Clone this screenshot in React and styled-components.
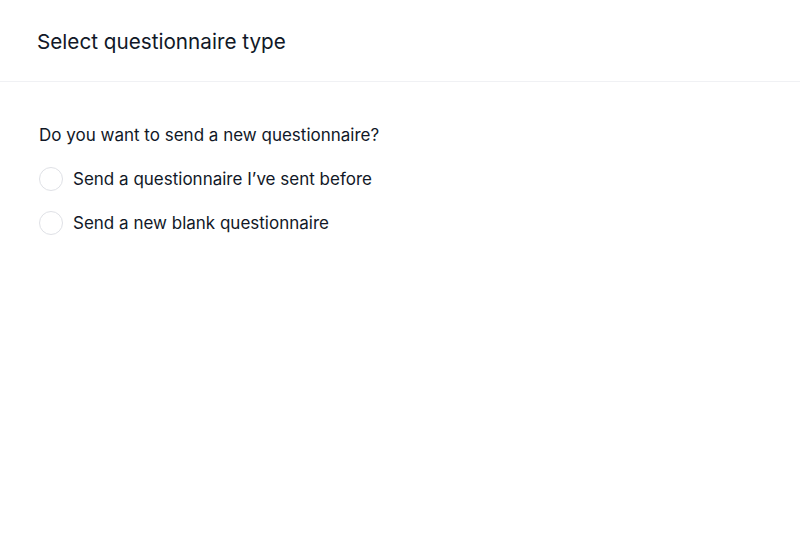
import { useState } from 'react';
import styled, { createGlobalStyle } from 'styled-components';

const GlobalStyle = createGlobalStyle`
    body {
        margin: 0;
        background: #ffffff;
        font-family: Inter, "Noto Sans", sans-serif;
        color: #111827;
    }
`;

const Page = styled.div`
    width: 800px;
    height: 560px;
    display: flex;
    flex-direction: column;
`;

const Header = styled.header`
    height: 82px;
    padding: 1px 37px 0 37px;
    box-sizing: border-box;
    display: flex;
    align-items: center;
    border-bottom: 1px solid #f0f1f4;
`;

const Title = styled.h1`
    margin: 0;
    font-size: 20.7px;
    font-weight: 400;
    color: #111827;
`;

const Body = styled.div`
    padding: 41px 39px;
    display: flex;
    flex-direction: column;
    gap: 20px;
`;

const Question = styled.p`
    margin: 0;
    font-size: 17px;
    font-weight: 400;
    line-height: 24px;
`;

const Options = styled.div`
    display: flex;
    flex-direction: column;
    gap: 20px;
`;

const Option = styled.label`
    display: flex;
    align-items: center;
    gap: 10px;
    cursor: pointer;
    font-size: 17px;
    line-height: 24px;
`;

const Radio = styled.span`
    width: 24px;
    height: 24px;
    box-sizing: border-box;
    border-radius: 50%;
    border: 1px solid ${props => props.checked ? '#111827' : '#dfe1e6'};
    background: #ffffff;
    display: flex;
    align-items: center;
    justify-content: center;

    &::after {
        content: '';
        width: 10px;
        height: 10px;
        border-radius: 50%;
        background: #111827;
        display: ${props => props.checked ? 'block' : 'none'};
    }
`;

const options = [
    'Send a questionnaire I\u2019ve sent before',
    'Send a new blank questionnaire',
];

const App = () => {
    const [selected, setSelected] = useState(null);

    return (
        <Page>
            <GlobalStyle />
            <Header>
                <Title>Select questionnaire type</Title>
            </Header>
            <Body>
                <Question>Do you want to send a new questionnaire?</Question>
                <Options>
                    {options.map((label, i) => (
                        <Option key={label} onClick={() => setSelected(i)}>
                            <Radio checked={selected === i} />
                            {label}
                        </Option>
                    ))}
                </Options>
            </Body>
        </Page>
    );
};

export default App;
